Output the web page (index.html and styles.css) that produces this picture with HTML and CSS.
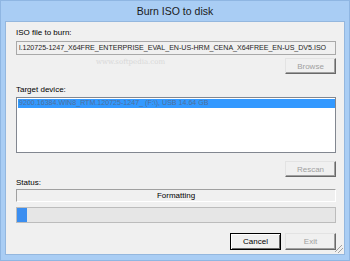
FILE: index.html
```html
<!DOCTYPE html>
<html lang="en">
<head>
    <meta charset="UTF-8">
    <title>Burn ISO to disk</title>
    <link rel="stylesheet" href="styles.css">
</head>
<body>
    <div class="window">
        <div class="titlebar">Burn ISO to disk</div>
        <div class="client">
            <div class="label">ISO file to burn:</div>
            <div class="textbox">l.120725-1247_X64FRE_ENTERPRISE_EVAL_EN-US-HRM_CENA_X64FREE_EN-US_DV5.ISO</div>
            <div class="row">
                <button class="btn" disabled>Browse</button>
            </div>
            <div class="watermark">www.softpedia.com</div>

            <div class="label label-gap">Target device:</div>
            <div class="listbox">
                <div class="list-item selected">9200.16384.WIN8_RTM.120725-1247_ (F:\), USB 14.64 GB</div>
            </div>
            <div class="row row-rescan">
                <button class="btn" disabled>Rescan</button>
            </div>

            <div class="label label-status">Status:</div>
            <div class="status-box">Formatting</div>
            <div class="progress">
                <div class="progress-fill" style="width: 3%"></div>
            </div>

            <div class="row row-actions">
                <button class="btn btn-default">Cancel</button>
                <button class="btn" disabled>Exit</button>
            </div>
            <div class="grip"></div>
        </div>
    </div>
</body>
</html>
```

FILE: styles.css
```css
body {
    margin: 0;
    padding: 0;
    font-family: "Liberation Sans", Arial, sans-serif;
    background: #a9cdf4;
}
.window {
    width: 350px;
    height: 261px;
    box-sizing: border-box;
    background: #a9cdf4;
    border: 1px solid #8fb6e2;
    padding: 0 4px 5px 4px;
    display: flex;
    flex-direction: column;
}
.titlebar {
    height: 20px;
    line-height: 21px;
    text-align: center;
    font-size: 10.5px;
    color: #1a1a1a;
}
.client {
    position: relative;
    flex: 1;
    background: #f0f0f0;
    border: 1px solid #94b7de;
    padding: 6px 8px 0 10px;
    display: flex;
    flex-direction: column;
}
.label {
    height: 10px;
    line-height: 10px;
    font-size: 8px;
    color: #000;
}
.label-gap {
    margin-top: 11px;
}
.label-status {
    margin-top: 1px;
}
.textbox {
    margin-top: 3px;
    height: 12px;
    line-height: 12px;
    border: 1px solid #a9a9a9;
    background: #f0f0f0;
    font-size: 7.1px;
    letter-spacing: -0.02px;
    padding-left: 2px;
    white-space: nowrap;
    overflow: hidden;
    color: #1e1e1e;
}
.row {
    display: flex;
    justify-content: flex-end;
    gap: 4px;
    margin-top: 3px;
}
.row-rescan {
    margin-top: 8px;
}
.row-actions {
    margin-top: 10px;
}
.btn {
    width: 51px;
    height: 16px;
    padding: 0;
    font-family: inherit;
    font-size: 8px;
    background: #f0f0f0;
    border: 1px solid;
    border-color: #e3e3e3 #696969 #696969 #e3e3e3;
    box-shadow: inset -1px -1px 0 #a0a0a0;
    color: #000;
}
.btn:disabled {
    color: #a0a0a0;
}
.row-actions .btn {
    height: 17px;
}
.btn-default {
    border: 1px solid #000;
    box-shadow: inset 1px 1px 0 #fff, inset -1px -1px 0 #696969;
}
.watermark {
    position: absolute;
    left: 90px;
    top: 36px;
    font-size: 7px;
    color: #d8d8d8;
    font-family: "DejaVu Serif", serif;
}
.listbox {
    margin-top: 2px;
    height: 53px;
    background: #fff;
    border: 1px solid #828790;
    padding: 1px 0 0 1px;
}
.list-item {
    height: 9px;
    line-height: 9px;
    font-size: 7.1px;
    padding-left: 1px;
    white-space: nowrap;
}
.selected {
    background: #3399ff;
    color: #4f6f99;
}
.status-box {
    margin-top: 1px;
    height: 11px;
    line-height: 11px;
    border: 1px solid;
    border-color: #a0a0a0 #fff #fff #a0a0a0;
    text-align: center;
    font-size: 8px;
}
.progress {
    margin-top: 5px;
    height: 14px;
    border: 1px solid #bcbcbc;
    background: #e6e6e6;
    padding: 0;
}
.progress-fill {
    height: 100%;
    background: #3b8ef0;
}
.grip {
    position: absolute;
    right: 1px;
    bottom: 1px;
    width: 8px;
    height: 8px;
    background: linear-gradient(135deg, transparent 40%, #a0a0a0 40%, #a0a0a0 48%, transparent 48%, transparent 65%, #a0a0a0 65%, #a0a0a0 73%, transparent 73%);
}
```
